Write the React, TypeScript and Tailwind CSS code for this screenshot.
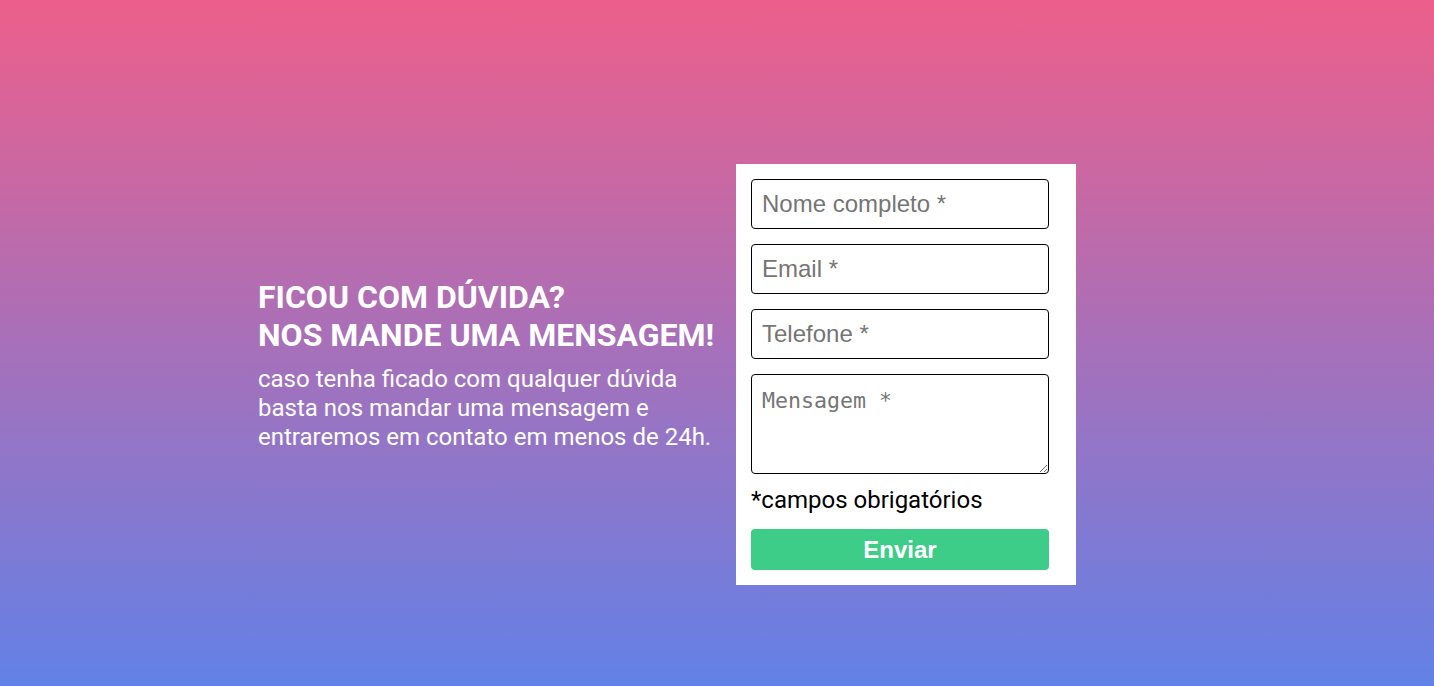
export default function App() {
  return (
    <div className="min-h-[686px] w-full bg-[linear-gradient(to_bottom,#ed5f8b,#6281e7)] flex items-start pl-[258px] pt-[164px]">
      <div className="flex items-center">
        <div className="w-[478px] text-white font-['Roboto',sans-serif] mt-[-19px]">
          <h2 className="text-[32px] leading-[38px] font-bold uppercase">
            Ficou com dúvida?
            <br />
            Nos mande uma mensagem!
          </h2>
          <p className="text-[24px] leading-[29px] mt-[11px]">
            caso tenha ficado com qualquer dúvida
            <br />
            basta nos mandar uma mensagem e
            <br />
            entraremos em contato em menos de 24h.
          </p>
        </div>

        <form className="w-[340px] bg-white p-[15px] flex flex-col">
          <input
            type="text"
            placeholder="Nome completo *"
            className="h-[50px] w-[298px] border border-black rounded-[4px] px-[10px] text-[24px] font-['Liberation_Sans',Arial,sans-serif] placeholder:text-[#757575] outline-none"
          />
          <input
            type="email"
            placeholder="Email *"
            className="mt-[15px] h-[50px] w-[298px] border border-black rounded-[4px] px-[10px] text-[24px] font-['Liberation_Sans',Arial,sans-serif] placeholder:text-[#757575] outline-none"
          />
          <input
            type="tel"
            placeholder="Telefone *"
            className="mt-[15px] h-[50px] w-[298px] border border-black rounded-[4px] px-[10px] text-[24px] font-['Liberation_Sans',Arial,sans-serif] placeholder:text-[#757575] outline-none"
          />
          <textarea
            placeholder="Mensagem *"
            className="mt-[15px] h-[100px] w-[298px] border border-black rounded-[4px] px-[10px] pt-[13px] pb-[10px] text-[21.6px] leading-[26px] font-['DejaVu_Sans_Mono',monospace] placeholder:text-[#757575] outline-none"
          />
          <p className="mt-[12px] text-[24px] leading-[28px] text-black font-['Roboto',sans-serif]">
            *campos obrigatórios
          </p>
          <button
            type="button"
            className="mt-[15px] h-[41px] w-[298px] rounded-[4px] bg-[#3dcd88] text-white text-[24px] font-bold font-['Liberation_Sans',Arial,sans-serif]"
          >
            Enviar
          </button>
        </form>
      </div>
    </div>
  )
}
